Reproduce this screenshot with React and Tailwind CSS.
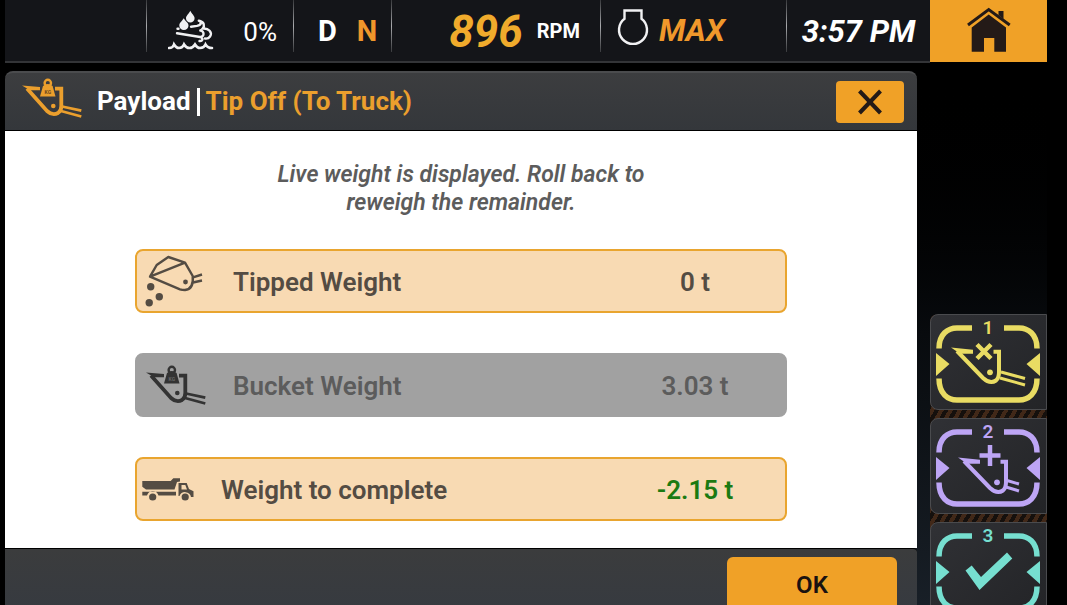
const statusItem = "flex items-center"

function Divider() {
  return <span className="h-13 w-px shrink-0 self-start bg-linear-to-b from-[#3a3b3e] via-[#a9aaad] to-[#3a3b3e]" />
}

function DefIcon() {
  return (
    <svg viewBox="0 0 46 44" className="h-11 w-[46px] shrink-0" fill="none" stroke="#f1f1f3" strokeWidth="2.400" strokeLinecap="round">
      <path d="M22.3 1.7C24 5 26.6 6.800 26.600 9.200A4.300 4.300 0 0 1 18 9.200C18 6.800 20.600 5 22.300 1.700Z" fill="#f1f1f3" stroke="none" />
      <path d="M15.700 9.300C17.400 12.300 20.500 13.800 20.500 16.400A4.600 4.600 0 0 1 11.300 16.400C11.300 13.800 14 12.300 15.700 9.300Z" fill="#f1f1f3" stroke="none" />
      <path d="M9.500 19.700h1M23 17.700l6-.8c5-.8 4.800-5 1.800-5.200" />
      <path d="M32 12.300c4 .6 5 4.500 2.700 7.200 6-.6 10 4 7.300 8-1 1.500-3 2.300-5 2" />
      <path d="M9 24.300l23 3.700c4.500.4 4.800-6.300.3-6.500M33 28.300c2.500 1.700 1.500 4-1.500 3.700" />
      <path d="M1 39Q5 39 6 35.500Q8 39 11 39Q14.500 39 16 35.500Q18 39 21.500 39Q25 39 27 35.500Q29 39 32 39Q36 39 37.500 35.500Q39.500 39 44 39" strokeWidth="2.600" />
    </svg>
  )
}

function EngineIcon() {
  return (
    <svg viewBox="0 0 32 38" className="mb-2 h-[38px] w-8 shrink-0" fill="none" stroke="#f1f1f3" strokeWidth="2.400">
      <path d="M7.500 2.500H24.500V10.800A14 14 0 1 1 7.500 10.800Z" />
    </svg>
  )
}

function HomeIcon() {
  return (
    <svg viewBox="0 0 44 47" className="h-[47px] w-11" fill="#241a17">
      <path d="M4.700 21.500L21.700 8.500L39 21.500V45.700H27.300V32H17V45.700H4.700Z" />
      <path d="M31.500 5H36.500V13L31.500 9Z" />
      <path d="M1 19L21.700 3.500L42.700 19" fill="none" stroke="#241a17" strokeWidth="3" />
    </svg>
  )
}

function BucketKgIcon({ className, holeColor }) {
  return (
    <svg viewBox="0 0 62 44" className={"h-11 w-[62px] shrink-0 " + className} fill="none" stroke="currentColor">
      <path d="M1 9.500L19 11V14.300H9Z" fill="currentColor" stroke="none" />
      <path d="M6 12.500L26 35Q31.500 40 37 37Q40.300 35 40.300 30V12.600H34" strokeWidth="3.800" />
      <circle cx="32.300" cy="30" r="2.300" fill="currentColor" stroke="none" />
      <path d="M41 30.500L60.300 34.700M40 35L60.300 40.500" strokeWidth="2.800" />
      <circle cx="26.800" cy="7" r="3.200" strokeWidth="2.400" />
      <path d="M22 10Q26.800 6 31.600 10L34.500 20.500H19Z" fill="currentColor" stroke="none" />
      <text x="26.800" y="17.500" fontSize="5" fontWeight="700" textAnchor="middle" fill={holeColor} stroke="none">KG</text>
    </svg>
  )
}

function TippedIcon() {
  return (
    <svg viewBox="0 0 62 56" className="h-14 w-[62px] shrink-0 text-[#544c43]" fill="none" stroke="currentColor" strokeWidth="2.400" strokeLinejoin="round">
      <path d="M5 23.700L11.700 12L23.300 4L40 9.700L47.700 23Q49 36 40 37Q37 37 35 36.300L5 23.700L40 9.700" />
      <path d="M48 24.300L57 21.500M48 29.500L57 27.500" />
      <g fill="currentColor" stroke="none">
        <circle cx="40.500" cy="29" r="2.400" />
        <circle cx="5.700" cy="33.700" r="3.700" />
        <circle cx="14.300" cy="43.700" r="3.700" />
        <circle cx="4.200" cy="49.700" r="3.700" />
      </g>
    </svg>
  )
}

function TruckIcon() {
  return (
    <svg viewBox="0 0 52 25" className="h-[25px] w-[52px] shrink-0" fill="#544c43">
      <path d="M.3 4H28.700L31.300 1.300H38V4.500L35 5L32.500 12.500H4L.3 9.700Z" />
      <path d="M.3 14.700H34V18.500H16.500A6 6 0 0 0 5 18.500H.3Z" />
      <circle cx="10.700" cy="20" r="3.600" />
      <path fillRule="evenodd" d="M36.500 6H44.700L47 12L51.500 14.300V20H49A6 6 0 0 0 37.500 19H36.500ZM39.500 8V12.500H45L43.300 8Z" />
      <circle cx="43.200" cy="20" r="3.600" />
    </svg>
  )
}

function BucketLines({ arms }) {
  return (
    <>
      <path d="M21 33.500L43 35.700V39.700H30Z" fill="currentColor" />
      <path d="M27 37L53 64Q60 70.500 66 66.500Q69 64 69 58V37.700H63.500" stroke="currentColor" strokeWidth="4" />
      <circle cx="60" cy="58.300" r="2.900" fill="currentColor" />
      <path d={arms} stroke="currentColor" strokeWidth="3" fill="none" />
    </>
  )
}

const softKeys = [
  {
    id: 1,
    label: "Cancel tip off",
    color: "text-[#e9dc63]",
    art: (
      <>
        <BucketLines arms="M71 58L95 64.500M70 64L95 71" />
        <path d="M47 30.500L61 44.500M61 30.500L47 44.500" stroke="currentColor" strokeWidth="4.500" />
      </>
    ),
  },
  {
    id: 2,
    label: "Add bucket",
    color: "text-[#bda5f5]",
    art: (
      <>
        <g transform="translate(7 6)">
          <BucketLines arms="M70 56.500L82 60M69 63L82 67" />
        </g>
        <path d="M49.500 37.500H70.500M60 27V48" stroke="currentColor" strokeWidth="4.500" />
      </>
    ),
  },
  {
    id: 3,
    label: "Confirm",
    color: "text-[#76dfd0]",
    art: <path d="M35.500 48.500L41.700 43.500L51 55L77 30.500L82.300 36.500L49.500 68Z" fill="currentColor" />,
  },
]

function SoftKey({ id, label, color, art }) {
  return (
    <button
      type="button"
      aria-label={label}
      className={"block h-24 w-full shrink-0 rounded-l-lg border border-[#4a4b4e] bg-linear-to-br from-[#303135] to-[#232427] " + color}
    >
      <svg viewBox="1 1 115 94" className="h-full w-full" fill="none">
        <g stroke="currentColor" strokeWidth="5.500">
          <path d="M9 34.500C9 20 18 14 27 14H42" />
          <path d="M74 14H89C98 14 107 20 107 34.500" />
          <path d="M9 64.500C9 80 18 86 27 86H89C98 86 107 80 107 64.500" />
        </g>
        <path d="M6 39L19.500 50L6 62ZM110 39L96.500 50L110 62Z" fill="currentColor" />
        <text x="58" y="20" fontSize="19" fontWeight="600" textAnchor="middle" fill="currentColor">{id}</text>
        {art}
      </svg>
    </button>
  )
}

function WeightRow({ icon, label, value, muted, valueColor = "" }) {
  return (
    <div
      className={
        "flex h-16 items-center rounded-lg border-2 text-[26px] font-semibold " +
        (muted ? "border-[#a1a1a1] bg-[#a1a1a1] text-[#5c5c5c]" : "border-[#e9a52f] bg-[#f8dab3] text-[#544c43]")
      }
    >
      {icon}
      <span className="flex-1 pt-0.5">{label}</span>
      <span className={"w-[180px] pt-0.5 text-center " + valueColor}>{value}</span>
    </div>
  )
}

export default function App() {
  return (
    <div className="flex h-screen flex-col overflow-hidden bg-black pr-5 pl-[5px] font-[Roboto,sans-serif] text-white">
      <header className="flex h-[63px] shrink-0">
        <div className="grid flex-1 grid-cols-[141fr_147fr_98fr_209fr_186fr_144fr] border-b-2 border-[#333437] bg-[#141519]">
          <div />
          <div className={statusItem}>
            <Divider />
            <div className="flex flex-1 items-center justify-between pr-4 pl-[21px]">
              <DefIcon />
              <span className="pt-1 text-[26px]">0%</span>
            </div>
          </div>
          <div className={statusItem}>
            <Divider />
            <div className="flex flex-1 gap-5 pt-0.5 pl-6 text-[29px] font-bold">
              <span>D</span>
              <span className="text-[#f0962b]">N</span>
            </div>
          </div>
          <div className={statusItem}>
            <Divider />
            <div className="flex flex-1 items-center justify-end gap-3.5 pr-5">
              <span className="pt-0.5 text-[44px] leading-none font-bold text-[#f0ab2c] italic">896</span>
              <span className="text-xl font-bold">RPM</span>
            </div>
          </div>
          <div className={statusItem}>
            <Divider />
            <div className="flex flex-1 items-center gap-2.5 pl-4">
              <EngineIcon />
              <span className="text-[31px] leading-none font-bold text-[#f0982b] italic">MAX</span>
            </div>
          </div>
          <div className={statusItem}>
            <Divider />
            <time className="flex-1 pt-0.5 text-center text-[31px] leading-none font-bold whitespace-nowrap italic">3:57 PM</time>
          </div>
        </div>
        <button type="button" aria-label="Home" className="flex h-[62px] w-[117px] justify-center bg-[#f0a127] pt-1.5">
          <HomeIcon />
        </button>
      </header>

      <div className="flex min-h-0 flex-1 gap-[13px] bg-linear-to-b from-black via-[#080b0e] to-[#181f27]">
        <main className="mt-2 flex flex-1 flex-col">
          <div className="flex h-[60px] shrink-0 items-center rounded-t-lg border-t-2 border-b border-t-[#4b4c4e] border-b-black bg-linear-to-b from-[#3c3d3f] to-[#34373b] pr-[13px] pl-4">
            <div className="self-start pt-[3px]">
              <BucketKgIcon className="text-[#eb9f2d]" holeColor="#6b4a20" />
            </div>
            <h1 className="flex flex-1 items-center gap-1.5 pl-3.5 text-[26px] font-bold">
              <span>Payload</span>
              <span className="h-7 w-[3px] bg-white" />
              <span className="text-[#eb9f2d]">Tip Off (To Truck)</span>
            </h1>
            <button type="button" aria-label="Close" className="flex h-[42px] w-[68px] items-center justify-center rounded-sm bg-[#f0a127]">
              <svg viewBox="0 0 24 26" className="h-[26px] w-6" stroke="#241a17" strokeWidth="4">
                <path d="M1.500 2L22.500 24M22.500 2L1.500 24" />
              </svg>
            </button>
          </div>

          <section className="h-[417px] shrink-0 bg-white px-[130px] pt-[30px]">
            <p className="mx-auto max-w-96 text-center text-[23px] leading-7 font-semibold text-[#5c5c5c] italic">
              Live weight is displayed. Roll back to reweigh the remainder.
            </p>
            <div className="mt-8 flex flex-col gap-10">
              <WeightRow icon={<div className="w-24 shrink-0 pl-2"><TippedIcon /></div>} label="Tipped Weight" value="0 t" />
              <WeightRow
                muted
                icon={<div className="w-24 shrink-0 pl-2"><BucketKgIcon className="text-[#333333]" holeColor="#666666" /></div>}
                label="Bucket Weight"
                value="3.03 t"
              />
              <WeightRow
                icon={<div className="w-[84px] shrink-0 pl-[5px]"><TruckIcon /></div>}
                label="Weight to complete"
                value="-2.15 t"
                valueColor="text-[#1c7a12]"
              />
            </div>
          </section>

          <footer className="flex flex-1 items-start justify-end rounded-tr-sm border-t border-black bg-linear-to-b from-[#3b3c3d] to-[#363a40] pt-2 pr-5">
            <button type="button" className="h-14 w-[170px] shrink-0 rounded-t-md bg-[#f0a127] text-2xl font-semibold text-[#1a1210]">
              OK
            </button>
          </footer>
        </main>

        <aside className="flex w-[117px] shrink-0 flex-col overflow-hidden pt-[251px]">
          <div className="flex flex-col gap-2 rounded-tl-lg bg-[repeating-linear-gradient(120deg,#412818_0px,#412818_4px,#15100d_4px,#15100d_8px)]">
            {softKeys.map(key => (
              <SoftKey key={key.id} {...key} />
            ))}
          </div>
        </aside>
      </div>
    </div>
  )
}
